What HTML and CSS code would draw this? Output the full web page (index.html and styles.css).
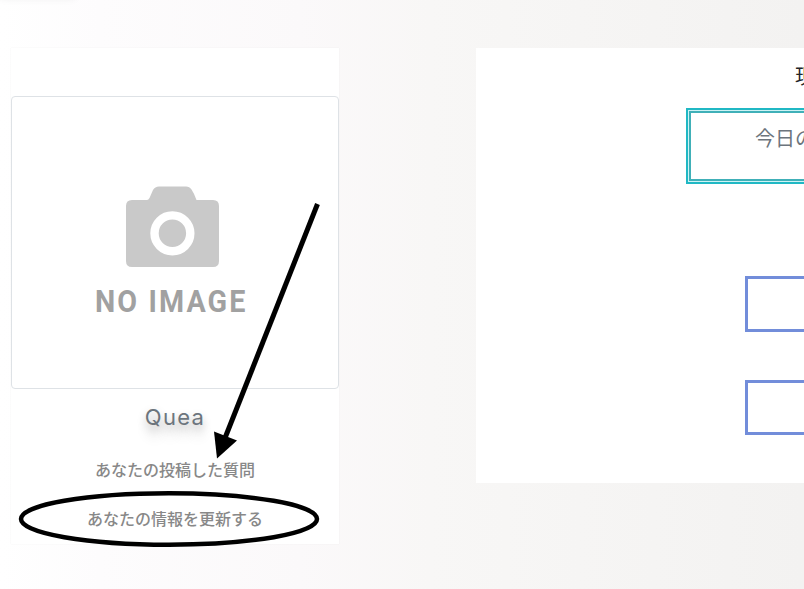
FILE: index.html
```html
<!DOCTYPE html>
<html lang="ja">
<head>
<meta charset="utf-8">
<title>Quea</title>
<link rel="stylesheet" href="styles.css">
</head>
<body>
<div class="header-shadow"></div>
<main class="page">
  <aside class="profile">
    <div class="profile-image">
      <svg width="326" height="291" viewBox="12 97 326 291">
        <path fill="#c9c9c9" d="M132 200H147Q148.500 200 149.500 198L153 190Q155 186.500 159 186.500H186Q189.500 186.500 191.500 189.500Q194.500 194 196.500 200H213Q219 200 219 206V261Q219 267 213 267H132Q126 267 126 261V206Q126 200 132 200Z"/>
        <circle cx="172.400" cy="233.300" r="17.900" fill="none" stroke="#fff" stroke-width="8.400"/>
        <text class="no-image" transform="translate(95 311.500) scale(.94 1)" textLength="160" lengthAdjust="spacing">NO IMAGE</text>
      </svg>
    </div>
    <h1 class="name">Quea</h1>
    <a class="link">あなたの投稿した質問</a>
    <a class="link">あなたの情報を更新する</a>
  </aside>
  <section class="content">
    <h2 class="title">現</h2>
    <div class="question">今日の</div>
    <div class="answer answer-first"></div>
    <div class="answer answer-second"></div>
  </section>
</main>
<svg class="annotation" width="804" height="589" viewBox="0 0 804 589">
  <path d="M317.500 204L225 438" stroke="#000" stroke-width="5"/>
  <path d="M214 431.500L237 440.500L217 458.500Z"/>
  <ellipse cx="169" cy="519" rx="148" ry="25.700" fill="none" stroke="#000" stroke-width="4.500"/>
</svg>
</body>
</html>
```
FILE: styles.css
```css
* { box-sizing: border-box; }
body {
  margin: 0;
  height: 589px;
  overflow: hidden;
  position: relative;
  font-family: "Inter", "Noto Sans CJK JP", sans-serif;
  background: linear-gradient(90deg, #fff 0, #fdfcfd 100px, #fbf9fa 300px, #f8f7f6 430px, #f3f2f1 804px);
}
.header-shadow {
  position: absolute;
  top: -12px;
  left: 0;
  width: 75px;
  height: 10px;
  box-shadow: 0 0 8px rgba(0, 0, 0, .08);
}
.page {
  display: flex;
  align-items: flex-start;
  gap: 137px;
  padding: 48px 0 0 11px;
}
.profile {
  width: 328px;
  height: 496px;
  flex: none;
  padding-top: 48px;
  background: #fff;
  box-shadow: 0 0 1px rgba(0, 0, 0, .08);
  display: flex;
  flex-direction: column;
  align-items: center;
}
.profile-image {
  width: 328px;
  height: 293px;
  border: 1px solid #dee2e6;
  border-radius: 4px;
}
.profile-image svg { display: block; }
.no-image {
  font: 700 30.5px Roboto, sans-serif;
  fill: #a1a1a1;
}
.name {
  margin: 13px 0 26px;
  font-size: 22px;
  line-height: 30px;
  font-weight: 400;
  letter-spacing: 1.3px;
  color: #6c757d;
  text-shadow: 0 4px 8px rgba(0, 0, 0, .25), 0 12px 12px rgba(0, 0, 0, .12);
}
.link {
  font-size: 16px;
  line-height: 24px;
  margin-bottom: 25px;
  font-weight: 500;
  color: #888;
}
.content {
  width: 328px;
  height: 435px;
  flex: none;
  padding-top: 14px;
  background: #fff;
  overflow: hidden;
}
.title {
  margin: 0 0 16px 319px;
  font-size: 20px;
  line-height: 30px;
  font-weight: 400;
  color: #212529;
}
.question {
  width: 240px;
  height: 76px;
  margin-left: 210px;
  padding: 14px 0 0 67px;
  border: 2px solid #20b8c4;
  box-shadow: inset 0 0 0 1px #cdf3f5, inset 0 0 0 3px #40b0b8;
  font-size: 20px;
  line-height: 30px;
  color: #6c757d;
}
.answer {
  width: 122px;
  margin-left: 269px;
  border: 3px solid #728dda;
}
.answer-first { height: 56px; margin-top: 92px; }
.answer-second { height: 55px; margin-top: 48px; }
.annotation {
  position: absolute;
  top: 0;
  left: 0;
}
```
